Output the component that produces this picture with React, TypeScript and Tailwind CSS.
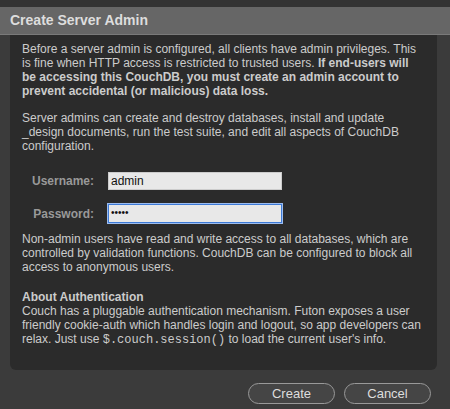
export default function App() {
  return (
    <div className="w-[450px] h-[409px] bg-[#3b3b3b] flex flex-col overflow-hidden" style={{ fontFamily: '"Liberation Sans", Arial, sans-serif' }}>
      <div className="h-[7px] shrink-0 bg-[#333333]" />
      <div className="h-[28px] shrink-0 bg-[#666666] border-b border-[#7a7a7a] flex items-center px-[10px]">
        <span className="text-[14px] font-bold text-[#dddddd]">Create Server Admin</span>
      </div>
      <div className="shrink-0 mx-[10px] mr-[13px] bg-[#2b2b2b] rounded-b-[6px] pl-[12px] pr-[12px] pt-[7px] pb-[24px] text-[12px] leading-[14px] text-[#cccccc]">
        <p className="mb-[13px]">
          Before a server admin is configured, all clients have admin privileges. This is fine when HTTP access is restricted to trusted users.{" "}
          <strong>If end-users will<br />be accessing this CouchDB, you must create an admin account to prevent accidental (or malicious) data loss.</strong>
        </p>
        <p>
          Server admins can create and destroy databases, install and update _design documents, run the test suite, and edit all aspects of CouchDB configuration.
        </p>
        <div className="mt-[19px] mb-[9px] flex flex-col gap-[14px]">
          <div className="flex items-center">
            <label className="w-[72px] text-right font-bold text-[#999999] text-[12px]">Username:</label>
            <div className="ml-[14px] w-[174px] h-[18px] bg-[#e8e8e8] border border-[#cccccc] text-[#111111] text-[12px] leading-[16px] px-[2px]">admin</div>
          </div>
          <div className="flex items-center">
            <label className="w-[72px] text-right font-bold text-[#999999] text-[12px]">Password:</label>
            <div className="ml-[14px] w-[174px] h-[19px] bg-[#e8e8e8] border border-[#3d7ad6] outline outline-1 outline-[#9bbcf0] text-[#111111] text-[10px] leading-[16px] px-[2px]">•••••</div>
          </div>
        </div>
        <p className="mb-[16px]">
          Non-admin users have read and write access to all databases, which are controlled by validation functions. CouchDB can be configured to block all access to anonymous users.
        </p>
        <p className="font-bold">About Authentication</p>
        <p>
          Couch has a pluggable authentication mechanism. Futon exposes a user friendly cookie-auth which handles login and logout, so app developers can relax. Just use{" "}
          <code className="text-[12px] leading-none" style={{ fontFamily: '"Liberation Mono", "Courier New", monospace' }}>$.couch.session()</code> to load the current user's info.
        </p>
      </div>
      <div className="shrink-0 flex justify-end gap-[9px] pr-[19px] pt-[13px]">
        <button className="w-[87px] h-[21px] rounded-full border border-[#999999] bg-[#454545] text-[#dddddd] text-[13px] leading-[19px]">Create</button>
        <button className="w-[87px] h-[21px] rounded-full border border-[#999999] bg-[#454545] text-[#dddddd] text-[13px] leading-[19px]">Cancel</button>
      </div>
    </div>
  );
}
